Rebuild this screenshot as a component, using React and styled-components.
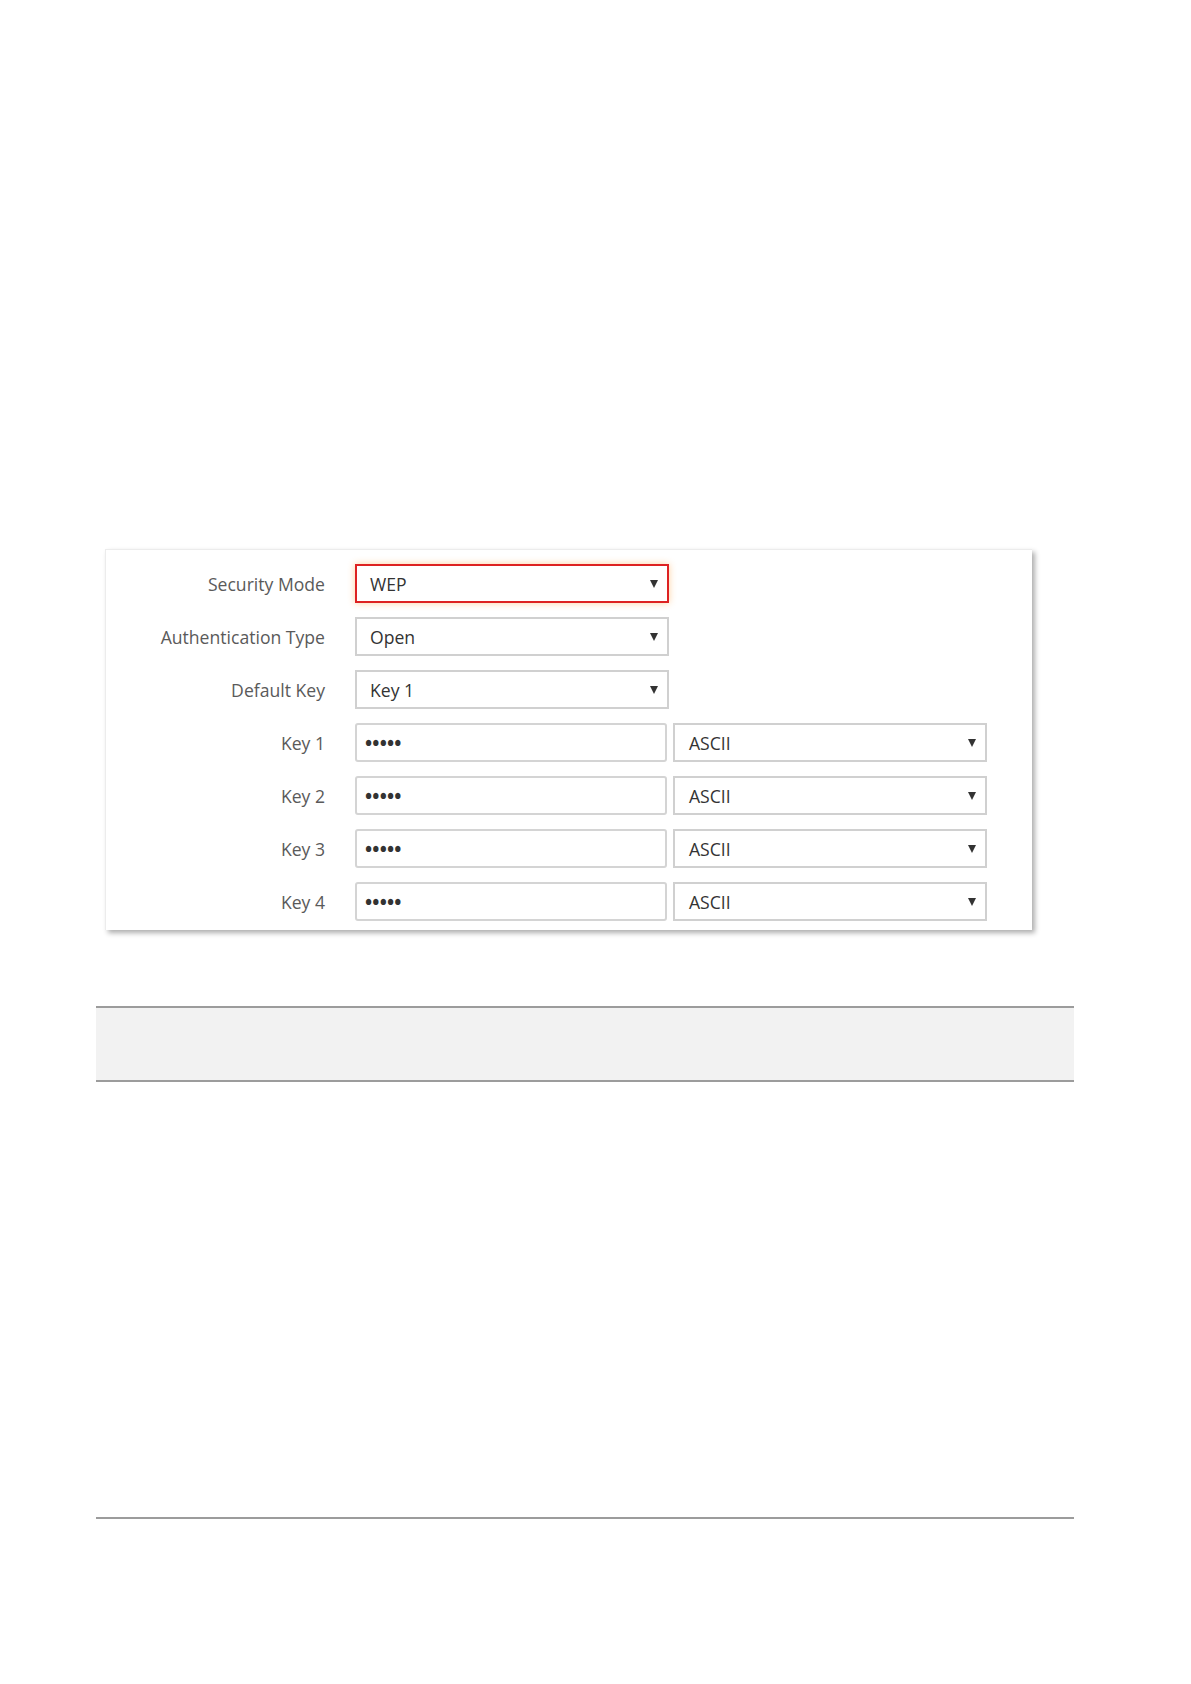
import React from "react";
import styled, { createGlobalStyle } from "styled-components";

const GlobalStyle = createGlobalStyle`
  html, body { margin: 0; padding: 0; background: #ffffff; }
  body { font-family: "Open Sans", "Noto Sans", Arial, sans-serif; }
`;

const Page = styled.div`
  width: 1191px;
  min-height: 1684px;
  padding-top: 549px;
  box-sizing: border-box;
`;

const Panel = styled.div`
  margin-left: 105px;
  width: 927px;
  height: 381px;
  box-sizing: border-box;
  padding: 14px 0 9px 0;
  background: #fff;
  border-top: 1px solid #ececec;
  border-left: 1px solid #ececec;
  box-shadow: 3px 3px 5px rgba(0, 0, 0, 0.32);
  display: grid;
  grid-template-columns: 219px 342px 320px;
  row-gap: 14px;
  grid-auto-rows: 39px;
  align-items: center;
`;

const Label = styled.div`
  text-align: right;
  font-size: 17.6px;
  color: #5a5a5a;
  white-space: nowrap;
`;

const Select = styled.div`
  position: relative;
  box-sizing: border-box;
  height: 39px;
  width: 314px;
  margin-left: ${(p) => p.$ml || 0}px;
  border: 2px solid ${(p) => (p.$active ? "#dd2222" : "#d0d0d0")};
  box-shadow: ${(p) => (p.$active ? "0 0 7px rgba(255, 150, 40, 0.45)" : "none")};
  display: flex;
  align-items: center;
  padding-left: ${(p) => p.$pl || 13}px;
  font-size: 17.6px;
  color: #333;
  background: #fff;
  &::after {
    content: "";
    position: absolute;
    right: 9px;
    top: 50%;
    margin-top: -4px;
    border-left: 4px solid transparent;
    border-right: 4px solid transparent;
    border-top: 8px solid #333;
  }
`;

const Field = styled.div`
  box-sizing: border-box;
  height: 39px;
  width: 312px;
  margin-left: 30px;
  border: 2px solid #d4d4d4;
  border-radius: 3px;
  display: flex;
  align-items: center;
  padding-left: 8px;
  font-size: 19px;
  font-weight: 700;
  letter-spacing: 0.2px;
  color: #333;
  background: #fff;
`;

const Span2 = styled.div`
  grid-column: 2 / span 2;
  padding-left: 30px;
`;

const Note = styled.div`
  margin: 76px 0 0 96px;
  width: 978px;
  height: 76px;
  box-sizing: border-box;
  background: #f2f2f2;
  border-top: 2px solid #9c9c9c;
  border-bottom: 2px solid #9c9c9c;
`;

const Rule = styled.div`
  margin: 435px 0 0 96px;
  width: 978px;
  height: 2px;
  background: #9c9c9c;
`;

const topRows = [
  { label: "Security Mode", value: "WEP", active: true },
  { label: "Authentication Type", value: "Open" },
  { label: "Default Key", value: "Key 1" },
];

const keys = ["Key 1", "Key 2", "Key 3", "Key 4"];

export default function App() {
  return (
    <>
      <GlobalStyle />
      <Page>
        <Panel>
          {topRows.map((r) => (
            <React.Fragment key={r.label}>
              <Label>{r.label}</Label>
              <Span2>
                <Select $active={r.active}>{r.value}</Select>
              </Span2>
            </React.Fragment>
          ))}
          {keys.map((k) => (
            <React.Fragment key={k}>
              <Label>{k}</Label>
              <Field>•••••</Field>
              <Select $ml={6} $pl={14}>ASCII</Select>
            </React.Fragment>
          ))}
        </Panel>
        <Note />
        <Rule />
      </Page>
    </>
  );
}
